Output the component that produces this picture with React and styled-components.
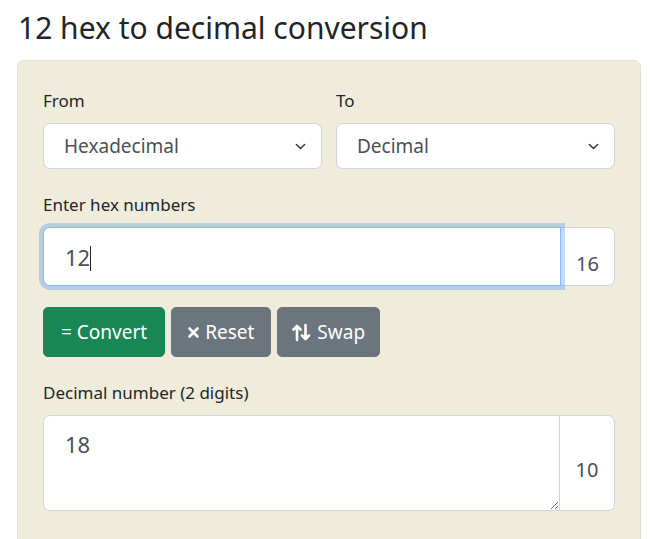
import React from "react";
import styled, { createGlobalStyle } from "styled-components";

const GlobalStyle = createGlobalStyle`
  * { box-sizing: border-box; }
  body {
    margin: 0;
    background: #fff;
    font-family: "Noto Sans", "Open Sans", sans-serif;
    color: #212529;
  }
`;

const Page = styled.div`
  width: 624px;
  margin-left: 17px;
`;

const Title = styled.h1`
  font-size: 30px;
  font-weight: 400;
  line-height: 36px;
  margin: 10px 0 14px 1px;
  color: #212529;
`;

const Panel = styled.div`
  background: #efecdc;
  border: 1px solid #e2e0d3;
  border-radius: 7px;
  padding: 26px 25px 40px;
`;

const Row = styled.div`
  display: grid;
  grid-template-columns: 1fr 1fr;
  gap: 14px;
`;

const Field = styled.div`
  margin-bottom: ${({ $last }) => ($last ? "0" : "22px")};
`;

const Label = styled.label`
  display: block;
  font-size: 17px;
  line-height: 27px;
  margin-bottom: 9px;
`;

const chevron =
  "data:image/svg+xml,%3csvg xmlns='http://www.w3.org/2000/svg' viewBox='0 0 16 16'%3e%3cpath fill='none' stroke='%23343a40' stroke-linecap='round' stroke-linejoin='round' stroke-width='2.2' d='m2 5 6 6 6-6'/%3e%3c/svg%3e";

const Select = styled.select`
  appearance: none;
  display: block;
  width: 100%;
  height: 46px;
  padding: 7px 40px 7px 20px;
  font: inherit;
  font-size: 19px;
  line-height: 30px;
  color: #495057;
  background-color: #fff;
  background-image: url("${chevron}");
  background-repeat: no-repeat;
  background-position: right 14px center;
  background-size: 13px 11px;
  border: 1px solid #ced4da;
  border-radius: 7px;
  outline: none;
`;

const Group = styled.div`
  display: flex;
  align-items: stretch;
  position: relative;
`;

const NumberInput = styled.input`
  flex: 1;
  min-width: 0;
  height: 59px;
  padding: 12px 21px;
  font: inherit;
  font-size: 22px;
  line-height: 33px;
  color: #495057;
  background: #fff;
  border: 1px solid #86b7fe;
  border-radius: 7px 0 0 7px;
  box-shadow: 0 0 0 4px rgba(13, 110, 253, 0.25);
  outline: none;
  position: relative;
  z-index: 2;
`;

const TextArea = styled.textarea`
  flex: 1;
  min-width: 0;
  height: 96px;
  padding: 12px 21px;
  font: inherit;
  font-size: 22px;
  line-height: 33px;
  color: #495057;
  background: #fff;
  border: 1px solid #ced4da;
  border-radius: 7px 0 0 7px;
  outline: none;
  resize: vertical;
`;

const Addon = styled.span`
  width: ${({ $w }) => $w}px;
  display: flex;
  align-items: center;
  justify-content: center;
  padding-top: 13px;
  margin-left: -1px;
  font-size: 20px;
  color: #495057;
  background: #fff;
  border: 1px solid #ced4da;
  border-radius: 0 7px 7px 0;
`;

const Caret = styled.span`
  position: absolute;
  left: 47px;
  top: 19px;
  width: 1px;
  height: 25px;
  background: #212529;
  z-index: 3;
`;

const Buttons = styled.div`
  display: flex;
  gap: 6px;
  margin: 21px 0 22px;
`;

const Button = styled.button`
  display: inline-flex;
  align-items: center;
  gap: 6px;
  height: 50px;
  padding: 0 ${({ $px }) => $px}px;
  font: inherit;
  font-size: 19px;
  color: #fff;
  background: ${({ $variant }) => ($variant === "success" ? "#198754" : "#6c757d")};
  border: 1px solid ${({ $variant }) => ($variant === "success" ? "#198754" : "#6c757d")};
  border-radius: 5px;
  cursor: pointer;
`;

const XIcon = () => (
  <svg width="11" height="11" viewBox="0 0 11 11">
    <path d="M1.5 1.5l8 8M9.5 1.5l-8 8" stroke="#fff" strokeWidth="2.6" strokeLinecap="round" />
  </svg>
);

const SwapIcon = () => (
  <svg width="19" height="19" viewBox="0 0 19 19" fill="none" stroke="#fff" strokeWidth="2.6" strokeLinecap="round" strokeLinejoin="round">
    <path d="M5 17V3M1.5 6.5L5 3l3.5 3.5" />
    <path d="M13.5 2v14M10 12.5l3.5 3.5 3.5-3.5" />
  </svg>
);

export default function App() {
  return (
    <Page>
      <GlobalStyle />
      <Title>12 hex to decimal conversion</Title>
      <Panel>
        <Row>
          <Field>
            <Label>From</Label>
            <Select defaultValue="16">
              <option value="16">Hexadecimal</option>
              <option value="10">Decimal</option>
            </Select>
          </Field>
          <Field>
            <Label>To</Label>
            <Select defaultValue="10">
              <option value="16">Hexadecimal</option>
              <option value="10">Decimal</option>
            </Select>
          </Field>
        </Row>
        <Field $last>
          <Label>Enter hex numbers</Label>
          <Group>
            <NumberInput defaultValue="12" />
            <Caret />
            <Addon $w={55}>16</Addon>
          </Group>
        </Field>
        <Buttons>
          <Button $variant="success" $px={17}>= Convert</Button>
          <Button $px={16}><XIcon /> Reset</Button>
          <Button $px={14}><SwapIcon /> Swap</Button>
        </Buttons>
        <Field $last>
          <Label>Decimal number (2 digits)</Label>
          <Group>
            <TextArea defaultValue="18" />
            <Addon $w={56}>10</Addon>
          </Group>
        </Field>
      </Panel>
    </Page>
  );
}
